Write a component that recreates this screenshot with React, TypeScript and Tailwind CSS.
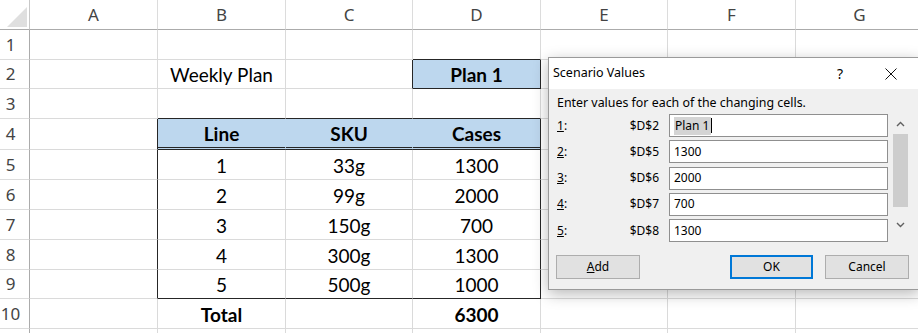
import React from "react";

const COLS = ["A", "B", "C", "D", "E", "F", "G"];

// cell values (row -> col -> text)
const values: Record<string, string> = {
  B2: "Weekly Plan",
  D2: "Plan 1",
  B4: "Line",
  C4: "SKU",
  D4: "Cases",
  B5: "1",
  C5: "33g",
  D5: "1300",
  B6: "2",
  C6: "99g",
  D6: "2000",
  B7: "3",
  C7: "150g",
  D7: "700",
  B8: "4",
  C8: "300g",
  D8: "1300",
  B9: "5",
  C9: "500g",
  D9: "1000",
  B10: "Total",
  D10: "6300",
};

type Fmt = { r?: "dark" | "fill"; b?: "dark" | "double"; fill?: boolean; bold?: boolean };

// borders and fills that differ from the plain gridline
const fmt: Record<string, Fmt> = {
  D1: { b: "dark" },
  C2: { r: "dark" },
  D2: { r: "dark", b: "dark", fill: true, bold: true },
  B3: { b: "dark" },
  C3: { b: "dark" },
  D3: { b: "dark" },
  A4: { r: "dark" },
  A5: { r: "dark" },
  A6: { r: "dark" },
  A7: { r: "dark" },
  A8: { r: "dark" },
  A9: { r: "dark" },
  B4: { r: "fill", b: "double", fill: true, bold: true },
  C4: { r: "fill", b: "double", fill: true, bold: true },
  D4: { r: "dark", b: "double", fill: true, bold: true },
  D5: { r: "dark" },
  D6: { r: "dark" },
  D7: { r: "dark" },
  D8: { r: "dark" },
  B9: { b: "dark" },
  C9: { b: "dark" },
  D9: { r: "dark", b: "dark" },
  B10: { bold: true },
  D10: { bold: true },
};

function cellClass(f: Fmt) {
  const right =
    f.r === "dark" ? "border-r-[#262626]" : f.r === "fill" ? "border-r-[#bdd7ee]" : "border-r-[#dadada]";
  const bottom =
    f.b === "dark"
      ? "border-b border-b-[#262626]"
      : f.b === "double"
        ? "border-b-[3px] border-b-[#262626] [border-bottom-style:double]"
        : "border-b border-b-[#dadada]";
  return [right, bottom, f.fill ? "bg-[#bdd7ee]" : "bg-white", f.bold ? "font-bold" : ""].join(" ");
}

function Sheet() {
  const rows = Array.from({ length: 11 }, (_, i) => i + 1);
  return (
    <div className="grid grid-cols-[30px_128px_128px_127px_128px_127px_128px_128px] grid-rows-[30px_30px_29px_30px_31px_30px_30px_30px_30px_29px_30px_30px] font-['Segoe_UI','Noto_Sans',sans-serif]">
      {/* corner */}
      <div className="relative border-r border-b border-r-[#c8c8c8] border-b-[#ababab] bg-white">
        <svg className="absolute left-[7px] top-[7px]" width="20" height="20" viewBox="0 0 20 20">
          <polygon points="20,0 20,20 0,20" fill="#dfdfdf" />
        </svg>
      </div>
      {COLS.map((c) => (
        <div
          key={c}
          className="flex items-center justify-center border-r border-b border-r-[#dcdcdc] border-b-[#ababab] bg-white text-[17px] text-[#444]"
        >
          {c}
        </div>
      ))}
      {rows.map((r) => (
        <React.Fragment key={r}>
          <div className="flex items-center justify-center border-r border-b border-r-[#ababab] border-b-[#dcdcdc] bg-white pr-[8px] text-[17px] text-[#444]">
            {r <= 10 ? r : ""}
          </div>
          {COLS.map((c) => {
            const id = `${c}${r}`;
            return (
              <div
                key={id}
                className={`flex items-center justify-center border-r pt-[3px] font-['Lato',sans-serif] text-[19px] text-black ${cellClass(fmt[id] ?? {})}`}
              >
                {values[id] ?? ""}
              </div>
            );
          })}
        </React.Fragment>
      ))}
    </div>
  );
}

function ChevronUp() {
  return (
    <svg width="9" height="6" viewBox="0 0 9 6">
      <path d="M1 5 L4.5 1.5 L8 5" fill="none" stroke="#606060" strokeWidth="1.4" />
    </svg>
  );
}

function ChevronDown() {
  return (
    <svg width="9" height="6" viewBox="0 0 9 6">
      <path d="M1 1 L4.5 4.5 L8 1" fill="none" stroke="#606060" strokeWidth="1.4" />
    </svg>
  );
}

const fields = [
  { n: "1", ref: "$D$2", value: "Plan 1" },
  { n: "2", ref: "$D$5", value: "1300" },
  { n: "3", ref: "$D$6", value: "2000" },
  { n: "4", ref: "$D$7", value: "700" },
  { n: "5", ref: "$D$8", value: "1300" },
];

function ScenarioDialog() {
  return (
    <div className="absolute left-[548px] top-[57px] w-[372px] border border-[#9a9a9a] bg-[#f0f0f0] font-['Segoe_UI','Noto_Sans',sans-serif] text-[12px] text-black shadow-[0_4px_14px_rgba(0,0,0,0.28)]">
      {/* title bar */}
      <div className="flex h-[31px] items-center bg-white pl-[4px] pr-[5px]">
        <span className="text-[12.5px]">Scenario Values</span>
        <span className="ml-auto flex w-[56px] justify-center text-[14px]">?</span>
        <span className="flex w-[46px] justify-center">
          <svg width="12" height="12" viewBox="0 0 12 12">
            <path d="M0.5 0.5 L11.5 11.5 M11.5 0.5 L0.5 11.5" stroke="#111" strokeWidth="1" />
          </svg>
        </span>
      </div>

      {/* body */}
      <div className="pl-[8px] pr-[10px] pt-[6px] pb-[10px]">
        <div className="h-[16px] text-[12.4px] leading-[16px]">Enter values for each of the changing cells.</div>

        <div className="mt-[3px] flex">
          <div className="flex w-[331px] flex-col gap-[3.25px]">
            {fields.map((f, i) => (
              <div key={f.n} className="flex h-[23px] items-center">
                <div className="flex w-[102px] justify-between">
                  <span>
                    <span className="underline">{f.n}</span>:
                  </span>
                  <span>{f.ref}</span>
                </div>
                <div className="ml-[10px] flex h-[23px] w-[219px] items-center border border-[#8f8f8f] bg-white pl-[4px]">
                  {i === 0 ? (
                    <>
                      <span className="bg-[#d4d4d4] px-[1px]">{f.value}</span>
                      <span className="h-[15px] w-px bg-black" />
                    </>
                  ) : (
                    <span>{f.value}</span>
                  )}
                </div>
              </div>
            ))}
          </div>
          {/* scrollbar */}
          <div className="ml-[4px] flex h-[128px] w-[17px] flex-col items-center">
            <div className="flex h-[20px] items-center">
              <ChevronUp />
            </div>
            <div className="h-[73px] w-[15px] bg-[#cdcdcd]" />
            <div className="flex flex-1 items-center">
              <ChevronDown />
            </div>
          </div>
        </div>

        <div className="mt-[13px] flex">
          <button className="-ml-[1px] h-[24px] w-[84px] border border-[#adadad] bg-[#e1e1e1]">
            <span className="underline">A</span>dd
          </button>
          <button className="ml-auto h-[24px] w-[83px] border-2 border-[#0078d7] bg-[#e1e1e1]">OK</button>
          <button className="ml-[12px] h-[24px] w-[84px] border border-[#adadad] bg-[#e1e1e1]">Cancel</button>
        </div>
      </div>
    </div>
  );
}

export default function App() {
  return (
    <div className="relative h-[333px] w-[918px] overflow-hidden bg-white">
      <Sheet />
      <ScenarioDialog />
    </div>
  );
}
